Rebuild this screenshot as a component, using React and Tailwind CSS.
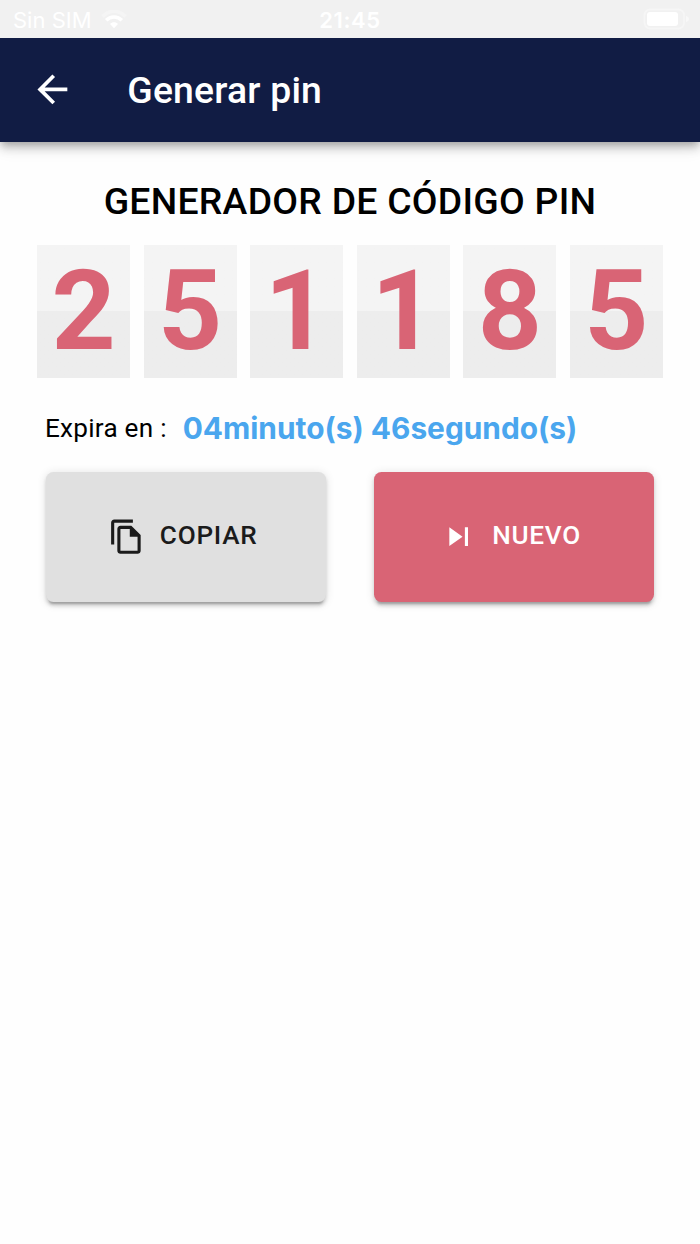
import React from "react";

const pin = ["2", "5", "1", "1", "8", "5"];

const StatusBar = () => (
  <div className="relative z-10 h-[37.5px] bg-[#f1f1f1] text-white grid grid-cols-3 items-center pl-[13px] pr-[11px] pt-[3px] font-['Inter',sans-serif] text-[22px]">
    <div className="flex items-center gap-[9px]">
      <span>Sin SIM</span>
      <svg width="26" height="20" viewBox="0 0 26 20" fill="none">
        <path d="M1.5 6.5C8 -0.5 18 -0.5 24.5 6.5" stroke="#f5f5f5" strokeWidth="3.5" />
        <path d="M5.2 10.2C9.5 5.8 16.5 5.8 20.8 10.2" stroke="white" strokeWidth="3.5" />
        <path d="M9 14C11.2 11.6 14.8 11.6 17 14L13 18.3Z" fill="white" />
      </svg>
    </div>
    <span className="text-center font-semibold tracking-[0.6px] -ml-[2px]">21:45</span>
    <svg className="justify-self-end -mt-[3px]" width="46" height="22" viewBox="0 0 46 22" fill="none">
      <rect x="1.5" y="1.5" width="39.5" height="19" rx="5.5" stroke="#f6f6f6" strokeWidth="1.8" />
      <rect x="4" y="4" width="31" height="14" rx="3" fill="white" />
      <path d="M43 8c2 .6 3 1.7 3 3s-1 2.4-3 3z" fill="#f8f8f8" />
    </svg>
  </div>
);

const AppHeader = () => (
  <header className="h-[104.5px] bg-[#111c44] text-white flex items-center pl-[30px] shadow-[0_4px_7px_-2px_rgba(0,0,0,0.2),0_7px_9px_0_rgba(0,0,0,0.14),0_2px_19px_0_rgba(0,0,0,0.12)]">
    <button aria-label="Volver">
      <svg className="size-[44.8px]" viewBox="0 0 24 24" fill="currentColor">
        <path d="M20 11H7.83l5.59-5.59L12 4l-8 8 8 8 1.41-1.41L7.83 13H20v-2z" />
      </svg>
    </button>
    <h1 className="ml-[52.5px] mt-[2px] text-[37.33px] font-medium tracking-[0.2px]">Generar pin</h1>
  </header>
);

const ActionButton = ({ icon, label, className }) => (
  <button
    className={`flex-1 h-[130.5px] pr-[7px] rounded-[7.5px] flex items-center justify-center text-[26.13px] font-medium tracking-[0.75px] shadow-[0_5.6px_2px_-3.7px_rgba(0,0,0,0.2),0_3.7px_3.7px_0_rgba(0,0,0,0.14),0_1.9px_9.3px_0_rgba(0,0,0,0.12)] ${className}`}
  >
    <svg className="size-[37.33px] mr-[15px]" viewBox="0 0 24 24" fill="currentColor">
      <path d={icon} />
    </svg>
    <span className="-mt-[3px]">{label}</span>
  </button>
);

const copyIcon =
  "M16 1H4c-1.1 0-2 .9-2 2v14h2V3h12V1zm-1 4H8c-1.1 0-1.99.9-1.99 2L6 21c0 1.1.89 2 1.99 2H19c1.1 0 2-.9 2-2V11l-6-6zM8 21V7h6v5h5v9H8z";
const nextIcon = "M6 18l8.5-6L6 6v12zM16 6v12h2V6h-2z";

const App = () => {
  return (
    <div className="min-h-screen bg-[#fefefe] text-black font-['Roboto',sans-serif]">
      <StatusBar />
      <AppHeader />

      <main className="pt-[29.4px]">
        <h2 className="text-center text-[37.33px] leading-[60px] font-medium tracking-[0.28px]">
          GENERADOR DE CÓDIGO PIN
        </h2>

        {/* Dígitos del pin */}
        <div className="mt-[13.4px] px-[37px] flex gap-[13.2px]">
          {pin.map((digit, i) => (
            <div
              key={i}
              className="flex-1 h-[133.6px] bg-linear-to-b from-[#f4f4f4] from-50% to-[#ededed] to-50% text-[#d96475] text-[112px] leading-[132px] font-bold text-center"
            >
              {digit}
            </div>
          ))}
        </div>

        {/* Tiempo restante */}
        <div className="mt-[29.4px] h-[40px] pl-[45px] flex items-center">
          <span className="text-[26.13px] leading-[40px] tracking-[0.25px]">Expira en :</span>
          <span className="ml-[16px] text-[29.87px] leading-[40px] font-bold text-[#4aa6ee] font-['Inter',sans-serif]">
            04minuto(s) 46segundo(s)
          </span>
        </div>

        <div className="mt-[24px] px-[46px] flex gap-[48px]">
          <ActionButton icon={copyIcon} label="COPIAR" className="bg-[#e0e0e0] text-[#1b1b1b]" />
          <ActionButton icon={nextIcon} label="NUEVO" className="bg-[#d96475] text-white" />
        </div>
      </main>
    </div>
  );
};

export default App;
